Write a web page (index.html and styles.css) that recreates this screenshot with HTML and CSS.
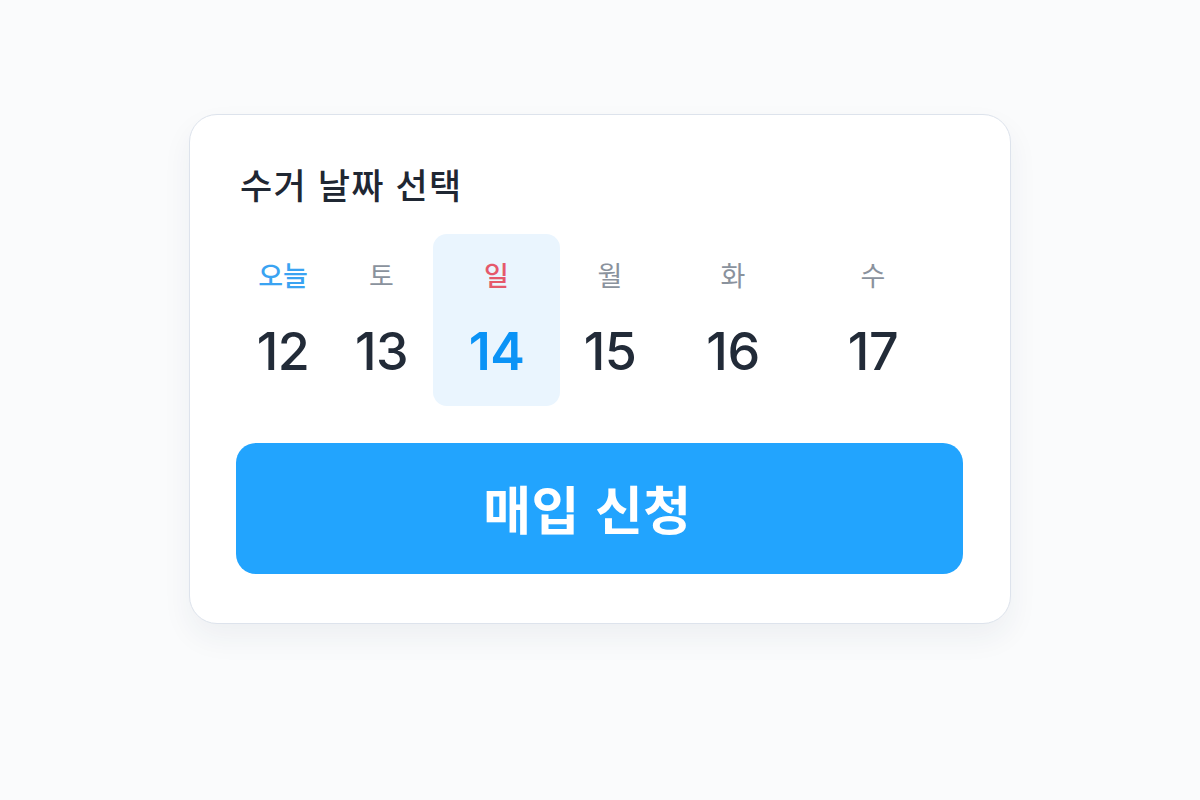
FILE: index.html
```html
<!DOCTYPE html>
<html lang="ko">
<head>
<meta charset="utf-8">
<title>수거 날짜 선택</title>
<link rel="stylesheet" href="styles.css">
</head>
<body>
<main class="page">
  <section class="card">
    <h1 class="title">수거 날짜 선택</h1>
    <div class="days">
      <div class="day"><span class="label today">오늘</span><span class="num">12</span></div>
      <div class="day"><span class="label">토</span><span class="num">13</span></div>
      <div class="day selected"><span class="label sun">일</span><span class="num">14</span></div>
      <div class="day"><span class="label">월</span><span class="num">15</span></div>
      <div class="day"><span class="label">화</span><span class="num">16</span></div>
      <div class="day"><span class="label">수</span><span class="num">17</span></div>
    </div>
    <button class="cta">매입 신청</button>
  </section>
</main>
</body>
</html>
```
FILE: styles.css
```css
* { box-sizing: border-box; }
html, body { margin: 0; padding: 0; }
body {
  width: 1200px;
  height: 800px;
  background: #fafbfc;
  font-family: Inter, "Noto Sans CJK KR", sans-serif;
  overflow: hidden;
}
.page {
  display: flex;
  justify-content: center;
  padding-top: 114px;
}
.card {
  width: 822px;
  height: 510px;
  background: #ffffff;
  border: 1px solid #dde3ec;
  border-radius: 28px;
  box-shadow: 0 14px 30px rgba(30, 50, 90, 0.06);
  padding: 47px 47px 0 46px;
}
.title {
  margin: 0 0 0 4px;
  font-family: "Noto Sans CJK KR", sans-serif;
  font-size: 35px;
  line-height: 44px;
  font-weight: 500;
  color: #1f2733;
  letter-spacing: 1.2px;
}
.days {
  margin-top: 28px;
  display: grid;
  grid-template-columns: 94px 103px 127px 100px 146px 134px;
  height: 172px;
}
.day {
  display: flex;
  flex-direction: column;
  align-items: center;
  padding-top: 24px;
  border-radius: 14px;
}
.day.selected { background: #eaf5fe; }
.label {
  font-family: "Noto Sans CJK KR", sans-serif;
  font-size: 27px;
  line-height: 34px;
  font-weight: 400;
  color: #8a929d;
}
.label.today { color: #3aa3f2; font-weight: 500; }
.label.sun { color: #e5596b; font-weight: 500; }
.num {
  margin-top: 30px;
  font-family: Inter, sans-serif;
  font-size: 52px;
  line-height: 60px;
  font-weight: 500;
  color: #222b38;
  letter-spacing: -0.5px;
}
.selected .num { color: #0b93f6; font-weight: 600; }
.cta {
  display: flex;
  align-items: center;
  justify-content: center;
  width: 727px;
  height: 131px;
  margin-top: 37px;
  border: none;
  border-radius: 20px;
  background: #22a4fe;
  color: #ffffff;
  font-family: "Noto Sans CJK KR", sans-serif;
  font-size: 52px;
  font-weight: 600;
  letter-spacing: 0.5px;
  padding: 0 24px 2px 0;
}
```
